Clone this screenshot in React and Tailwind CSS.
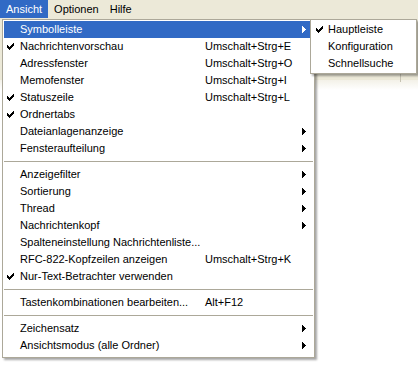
import React from "react";

const FONT = { fontFamily: '"Liberation Sans", Arial, sans-serif' };

// Hauptmenü "Ansicht"
const items = [
  { label: "Symbolleiste", sub: true, active: true },
  { label: "Nachrichtenvorschau", check: true, key: "Umschalt+Strg+E" },
  { label: "Adressfenster", key: "Umschalt+Strg+O" },
  { label: "Memofenster", key: "Umschalt+Strg+I" },
  { label: "Statuszeile", check: true, key: "Umschalt+Strg+L" },
  { label: "Ordnertabs", check: true },
  { label: "Dateianlagenanzeige", sub: true },
  { label: "Fensteraufteilung", sub: true },
  { sep: true },
  { label: "Anzeigefilter", sub: true },
  { label: "Sortierung", sub: true },
  { label: "Thread", sub: true },
  { label: "Nachrichtenkopf", sub: true },
  { label: "Spalteneinstellung Nachrichtenliste..." },
  { label: "RFC-822-Kopfzeilen anzeigen", key: "Umschalt+Strg+K" },
  { label: "Nur-Text-Betrachter verwenden", check: true },
  { sep: true },
  { label: "Tastenkombinationen bearbeiten...", key: "Alt+F12" },
  { sep: true },
  { label: "Zeichensatz", sub: true },
  { label: "Ansichtsmodus (alle Ordner)", sub: true },
];

const subItems = [
  { label: "Hauptleiste", check: true },
  { label: "Konfiguration" },
  { label: "Schnellsuche" },
];

function Check({ color = "#000" }) {
  return (
    <svg width="7" height="7" viewBox="0 0 7 7" shapeRendering="crispEdges">
      <path
        fill={color}
        d="M6 0h1v1h-1z M5 1h2v1h-2z M0 2h1v1h-1z M4 2h3v1h-3z M0 3h2v1h-2z M3 3h3v1h-3z M0 4h5v1h-5z M1 5h3v1h-3z M2 6h1v1h-1z"
      />
    </svg>
  );
}

function Arrow({ color = "#000" }) {
  return (
    <svg width="4" height="7" viewBox="0 0 4 7" shapeRendering="crispEdges">
      <path fill={color} d="M0 0h1v7h-1z M1 1h1v5h-1z M2 2h1v3h-1z M3 3h1v1h-1z" />
    </svg>
  );
}

function MenuRow({ item }) {
  const fg = item.active ? "#fff" : "#000";
  return (
    <div
      className={
        "flex h-[17px] items-center text-[11px] leading-none " +
        (item.active ? "bg-[#316AC5] text-white" : "text-black")
      }
    >
      <span className="flex w-[16px] shrink-0 pl-[3px]">{item.check && <Check color={fg} />}</span>
      <span className="w-[185px] shrink-0 whitespace-nowrap">{item.label}</span>
      <span className="flex-1 whitespace-nowrap">{item.key}</span>
      <span className="mr-[7px] flex w-[4px] shrink-0">{item.sub && <Arrow color={fg} />}</span>
    </div>
  );
}

export default function App() {
  return (
    <div className="relative h-[365px] w-[418px] overflow-hidden bg-white" style={FONT}>
      {/* Menüleiste */}
      <div className="flex h-[18px] items-stretch bg-[#ECE9D8] text-[11px] leading-none text-black">
        <div className="flex items-center bg-[#316AC5] px-[6px] text-white">Ansicht</div>
        <div className="flex items-center px-[6px]">Optionen</div>
        <div className="flex items-center px-[5px]">Hilfe</div>
      </div>

      {/* Symbolleiste (vom Menü verdeckt) */}
      <div className="flex h-[62px] items-end justify-end bg-[#ECE9D8]">
        <div className="mb-[-2px] mr-[17px] h-[8px] w-[1px] bg-[#C5C2B2]" />
      </div>
      <div className="h-[10px] bg-gradient-to-b from-[#F3F1E8] to-white" />

      {/* Dropdown Ansicht */}
      <div className="absolute left-[2px] top-[19px] w-[313px] border border-[#ACA899] bg-white px-[1px] pb-[3px] pt-[1px] shadow-[2px_2px_2px_rgba(0,0,0,0.35)]">
        {items.map((it, i) =>
          it.sep ? (
            <div key={i} className="flex h-[9px] items-center">
              <div className="h-[1px] w-full bg-[#ACA899]" />
            </div>
          ) : (
            <MenuRow key={i} item={it} />
          )
        )}
      </div>

      {/* Untermenü Symbolleiste */}
      <div className="absolute left-[310px] top-[19px] w-[107px] border border-[#ACA899] bg-white p-[1px] shadow-[2px_2px_2px_rgba(0,0,0,0.35)]">
        {subItems.map((it, i) => (
          <div key={i} className="flex h-[17px] items-center text-[11px] leading-none text-black">
            <span className="flex w-[16px] shrink-0 pl-[4px]">{it.check && <Check />}</span>
            <span className="whitespace-nowrap">{it.label}</span>
          </div>
        ))}
      </div>
    </div>
  );
}
